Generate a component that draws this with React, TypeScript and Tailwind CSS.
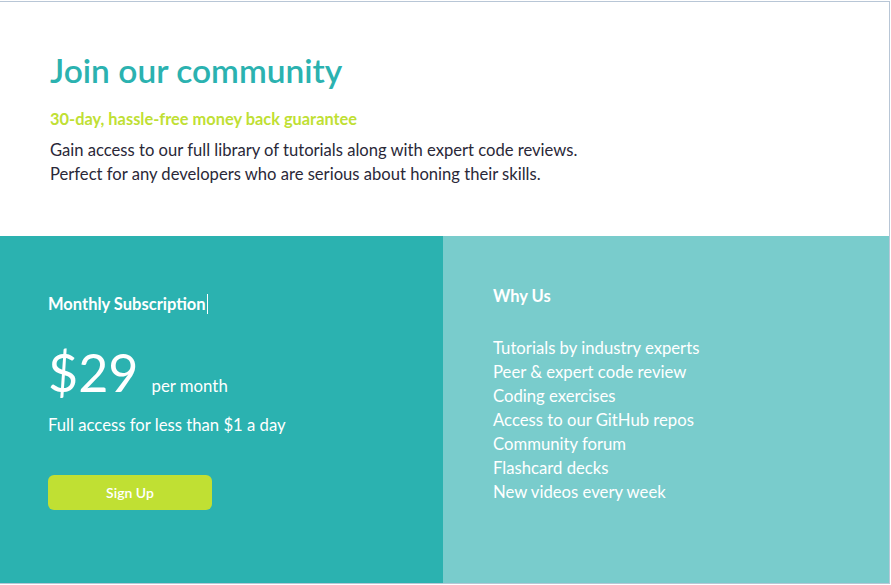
const features = [
  "Tutorials by industry experts",
  "Peer & expert code review",
  "Coding exercises",
  "Access to our GitHub repos",
  "Community forum",
  "Flashcard decks",
  "New videos every week",
];

export default function App() {
  return (
    <div className="h-[585px] w-[891px] bg-white pt-px font-['Lato','Noto_Sans',sans-serif]">
      <div className="flex h-[583px] w-[890px] flex-col border-t border-r border-b border-[#b8c6d6]">
        <section className="h-[234px] bg-white pl-[50px] pt-[48px]">
          <h1 className="text-[33.5px] leading-[40px] font-semibold text-[#2bb2b0]">
            Join our community
          </h1>
          <h2 className="mt-[17px] text-[16.4px] leading-[24px] font-bold text-[#c0df34]">
            30-day, hassle-free money back guarantee
          </h2>
          <p className="mt-[7px] text-[16.6px] leading-[24px] text-[#2a2838]">
            Gain access to our full library of tutorials along with expert code reviews.
            <br />
            Perfect for any developers who are serious about honing their skills.
          </p>
        </section>
        <div className="flex flex-1">
          <section className="w-[443px] bg-[#2bb2b0] pl-[48px] pt-[56px] text-white">
            <h3 className="flex items-center text-[16.5px] leading-[24px] font-bold">
              Monthly Subscription
              <span className="ml-px inline-block h-[20px] w-px bg-white" />
            </h3>
            <div className="mt-[27px] flex items-end">
              <span className="text-[52px] leading-[58px] font-normal">$29</span>
              <span className="mb-[3px] ml-[13px] text-[16.8px] leading-[24px]">per month</span>
            </div>
            <p className="mt-[12px] text-[16.7px] leading-[24px]">
              Full access for less than $1 a day
            </p>
            <button className="mt-[38px] h-[35px] w-[164px] rounded-[6px] bg-[#c0e033] text-[14px] font-semibold text-white">
              Sign Up
            </button>
          </section>
          <section className="flex-1 bg-[#79cccc] pl-[50px] pt-[48px] text-white">
            <h3 className="text-[16.5px] leading-[24px] font-bold">Why Us</h3>
            <ul className="mt-[28px]">
              {features.map((f) => (
                <li key={f} className="text-[16.7px] leading-[24px]">
                  {f}
                </li>
              ))}
            </ul>
          </section>
        </div>
      </div>
    </div>
  );
}
